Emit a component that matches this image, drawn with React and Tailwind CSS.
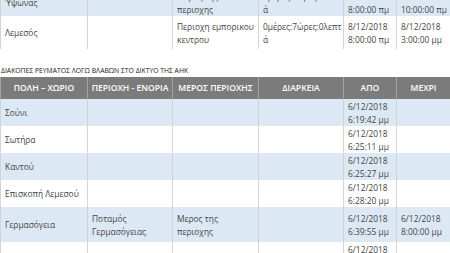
import React from 'react';

// ── Data ──

const topRows = [
  {
    cells: ['Ύψωνας', '', ['Μερος της', 'περιοχης'], ['0μέρες:2ώρες:0λεπτ', 'ά'], ['8/12/2018', '8:00:00 πμ'], ['8/12/2018', '10:00:00 πμ']],
    shade: true,
    h: 'h-[27px]',
  },
  {
    cells: ['Λεμεσός', '', ['Περιοχη εμπορικου', 'κεντρου'], ['0μέρες:7ώρες:0λεπτ', 'ά'], ['8/12/2018', '8:00:00 πμ'], ['8/12/2018', '3:00:00 μμ']],
    shade: false,
    h: 'h-[33px]',
  },
];

const headers = ['ΠΟΛΗ – ΧΩΡΙΟ', 'ΠΕΡΙΟΧΗ - ΕΝΟΡΙΑ', 'ΜΕΡΟΣ ΠΕΡΙΟΧΗΣ', 'ΔΙΑΡΚΕΙΑ', 'ΑΠΟ', 'ΜΕΧΡΙ'];

const faultRows = [
  { h: 'h-[27px]', cells: ['Σούνι', '', '', '', ['6/12/2018', '6:19:42 μμ'], ''] },
  { h: 'h-[27px]', cells: ['Σωτήρα', '', '', '', ['6/12/2018', '6:25:11 μμ'], ''] },
  { h: 'h-[27px]', cells: ['Καντού', '', '', '', ['6/12/2018', '6:25:27 μμ'], ''] },
  { h: 'h-[27px]', cells: ['Επισκοπή Λεμεσού', '', '', '', ['6/12/2018', '6:28:20 μμ'], ''] },
  { h: 'h-[35px]', cells: ['Γερμασόγεια', ['Ποταμός', 'Γερμασόγειας'], ['Μερος της', 'περιοχης'], '', ['6/12/2018', '6:39:55 μμ'], ['6/12/2018', '8:00:00 μμ']] },
  { h: 'h-[27px]', cells: ['', '', '', '', ['6/12/2018', '8:00:00 μμ'], ''] },
];

// ── Pieces ──

const Cols = () => (
  <colgroup>
    <col className="w-[87px]" />
    <col className="w-[85px]" />
    <col className="w-[86px]" />
    <col className="w-[85px]" />
    <col className="w-[53px]" />
    <col className="w-[54px]" />
  </colgroup>
);

const Cell = ({ value }) => (
  <td className="border-x border-[#d4d4d4] px-[4px] py-0 align-middle whitespace-nowrap">
    {Array.isArray(value)
      ? value.map((line, i) => <div key={i}>{line}</div>)
      : value}
  </td>
);

const Row = ({ cells, shade, h }) => (
  <tr className={`${shade ? 'bg-[#dce9f5]' : 'bg-white'} ${h}`}>
    {cells.map((c, i) => (
      <Cell key={i} value={c} />
    ))}
  </tr>
);

export default function App() {
  return (
    <div
      className="w-[450px] h-[253px] overflow-hidden bg-white text-[8.4px] leading-[13px] text-[#444]"
      style={{ fontFamily: '"Open Sans", "Noto Sans", sans-serif' }}
    >
      {/* Upper table, scrolled part way */}
      <table className="table-fixed w-[450px] border-collapse -mt-[11px]">
        <Cols />
        <tbody>
          {topRows.map((r, i) => (
            <Row key={i} cells={r.cells} shade={r.shade} h={r.h} />
          ))}
        </tbody>
      </table>

      <h3 className="mt-[17px] mb-[1px] pl-[1px] text-[6.8px] leading-[10px] font-normal text-[#222]">
        ΔΙΑΚΟΠΕΣ ΡΕΥΜΑΤΟΣ ΛΟΓΩ ΒΛΑΒΩΝ ΣΤΟ ΔΙΚΤΥΟ ΤΗΣ ΑΗΚ
      </h3>

      <table className="table-fixed w-[450px] border-collapse">
        <Cols />
        <thead>
          <tr className="bg-[#7b7b7b] h-[22px]">
            {headers.map((h) => (
              <th
                key={h}
                className="border-x border-[#a3a3a3] px-[2px] text-center font-semibold text-[8.6px] text-white whitespace-nowrap"
              >
                {h}
              </th>
            ))}
          </tr>
        </thead>
        <tbody>
          {faultRows.map((r, i) => (
            <Row key={i} cells={r.cells} shade={i % 2 === 0} h={r.h} />
          ))}
        </tbody>
      </table>
    </div>
  );
}
